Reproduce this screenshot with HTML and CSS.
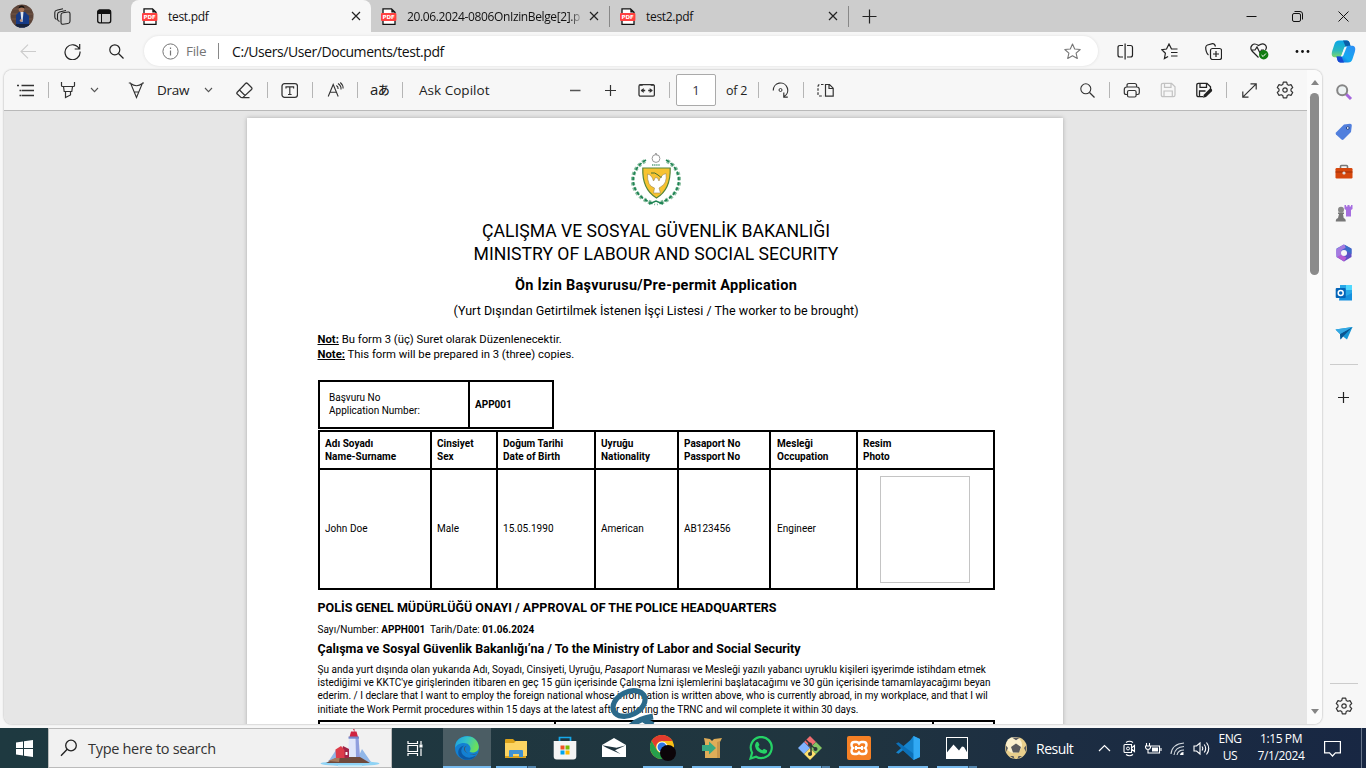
FILE: index.html
```html
<!DOCTYPE html>
<html lang="en">
<head>
<meta charset="utf-8">
<title>test.pdf</title>
<link rel="stylesheet" href="styles.css">
</head>
<body>
<svg width="0" height="0" class="defs">
  <defs>
    <symbol id="pdf" viewBox="0 0 16 17"><path d="M2 .8h8.5L14 4.3v12H2z" fill="#fff" stroke="#111" stroke-width="1.3"/><path d="M10.3 .8v3.7H14z" fill="#111"/><rect x="0" y="5" width="15.4" height="8" rx="1" fill="#ff4141"/><text x="7.7" y="11.3" text-anchor="middle" class="pdf-label">PDF</text></symbol>
    <symbol id="close" viewBox="0 0 10 10"><path d="M1 1l8 8M9 1l-8 8" fill="none" stroke="#222" stroke-width="1.2"/></symbol>
    <symbol id="gear" viewBox="0 0 18 18"><path d="M7.3 1.2h3.4l.5 2.2 1.6.9 2.2-.7 1.7 2.9-1.7 1.6v1.8l1.7 1.6-1.7 2.9-2.2-.7-1.6.9-.5 2.2H7.3l-.5-2.2-1.6-.9-2.2.7-1.7-2.9L3 9.900V8.100L1.300 6.500 3 3.600l2.200.7 1.600-.9z" fill="none" stroke="#333" stroke-width="1.2" stroke-linejoin="round"/><circle cx="9" cy="9" r="2.2" fill="none" stroke="#333" stroke-width="1.2"/></symbol>
    <symbol id="chev" viewBox="0 0 9 6"><path d="M1 1l3.5 3.6L8 1" fill="none" stroke="#555" stroke-width="1.1"/></symbol>
    <linearGradient id="g-edge" x1="0" y1="0" x2="1" y2=".3"><stop offset="0" stop-color="#1b9de2"/><stop offset=".5" stop-color="#34c1c9"/><stop offset="1" stop-color="#6be05a"/></linearGradient>
    <linearGradient id="g-cop1" x1="0" y1="0" x2="0" y2="1"><stop offset="0" stop-color="#0aa5e8"/><stop offset=".6" stop-color="#2bb8bd"/><stop offset="1" stop-color="#7fd86b"/></linearGradient>
    <linearGradient id="g-cop2" x1="1" y1="0" x2="0" y2="1"><stop offset="0" stop-color="#2f8cf5"/><stop offset=".6" stop-color="#12a9f0"/><stop offset="1" stop-color="#1450d8"/></linearGradient>
    <linearGradient id="g-365" x1="0" y1="0" x2="1" y2="1"><stop offset="0" stop-color="#3f79d8"/><stop offset="1" stop-color="#6a3fc0"/></linearGradient>
  </defs>
</svg>

<div class="browser">
  <header class="tabstrip">
    <svg class="avatar" viewBox="0 0 24 24"><defs><clipPath id="round"><circle cx="12" cy="12" r="11.500"/></clipPath></defs><g clip-path="url(#round)"><rect width="24" height="24" fill="#5b4338"/><path d="M0 5h24M0 10h24M0 15h24" stroke="#745747"/><path d="M6 24V11l3-3h6l4 4v12z" fill="#163a86"/><path d="M10.500 8h3l-1 10h-1z" fill="#dfe3ec"/><circle cx="11.500" cy="5.300" r="2.800" fill="#a8755a"/><path d="M8.600 4.500c0-4 6-4 6 0-2-1.500-4-1.500-6 0z" fill="#15110f"/><circle cx="11" cy="16.500" r="1.300" fill="#c39376"/><path d="M4 24l2-4h13l2 4z" fill="#18233d"/></g></svg>
    <svg class="i17" viewBox="0 0 17 17"><g fill="none" stroke="#222" stroke-width="1.100"><rect x="7" y="4.500" width="9" height="11.500" rx="2" transform="skewY(-8) translate(0 1.500)"/><path d="M5.500 13.500C4 13 3.500 12 3.500 11V6.500q0-2 2-2.500l6.500-1.500M2.500 11.500C1.200 11 .8 10 .8 9V4.500q0-1.800 1.900-2.200L9 .8"/></g></svg>
    <svg class="i17" viewBox="0 0 17 17"><rect x="1.700" y="2.200" width="13" height="12.600" rx="2" fill="none" stroke="#111" stroke-width="1.300"/><path d="M1.500 3.500q0-2 2-2h9.500q2 0 2 2V6h-13.500z" fill="#111"/><path d="M5.500 6v9" stroke="#111"/></svg>
    <div class="tab tab-active"><svg class="pdf"><use href="#pdf"/></svg><span class="tab-title">test.pdf</span><svg class="x"><use href="#close"/></svg></div>
    <div class="tab tab-sep"><svg class="pdf"><use href="#pdf"/></svg><span class="tab-title tab-fade">20.06.2024-0806OnIzinBelge[2].p</span><svg class="x"><use href="#close"/></svg></div>
    <div class="tab tab-sep"><svg class="pdf"><use href="#pdf"/></svg><span class="tab-title">test2.pdf</span><svg class="x"><use href="#close"/></svg></div>
    <svg class="i15" viewBox="0 0 15 15"><path d="M7.500 .5v14M.5 7.500h14" stroke="#222" stroke-width="1.200"/></svg>
    <svg class="i11" viewBox="0 0 11 11"><path d="M.5 5.500h10" stroke="#111"/></svg>
    <svg class="i11" viewBox="0 0 11 11"><g fill="none" stroke="#111"><rect x=".5" y="2.500" width="8" height="8" rx="1.500"/><path d="M2.500 .5H8q2.500 0 2.500 2.500v5.500"/></g></svg>
    <svg class="i11" viewBox="0 0 11 11"><path d="M.5 .5l10 10M10.500 .5l-10 10" stroke="#111"/></svg>
  </header>

  <div class="navbar">
    <svg class="i17" viewBox="0 0 17 17"><path d="M16 8.500H1M8 1.700L1 8.500l7 6.800" fill="none" stroke="#ccc" stroke-width="1.100"/></svg>
    <svg class="i17" viewBox="0 0 17 17"><path d="M15.300 6A7.500 7.500 0 1 0 16 8.500M15.700 1v5h-5" fill="none" stroke="#222" stroke-width="1.200"/></svg>
    <svg class="i15" viewBox="0 0 15 15"><path d="M9.500 9.500L14.500 14.500" stroke="#222" stroke-width="1.300"/><circle cx="5.800" cy="5.800" r="5" fill="none" stroke="#222" stroke-width="1.200"/></svg>
    <div class="omnibox">
      <svg class="i17" viewBox="0 0 17 17"><circle cx="8.500" cy="8.500" r="7.600" fill="none" stroke="#757575"/><path d="M8.500 7.500v5M8.500 4.500v1.400" stroke="#757575" stroke-width="1.200"/></svg>
      <span class="file-label">File</span><i class="bar"></i><span class="url">C:/Users/User/Documents/test.pdf</span>
      <svg class="i17 fav" viewBox="0 0 17 17"><path d="M8.500 1l2.200 5 5.500.5-4.100 3.600 1.200 5.400-4.800-2.800-4.800 2.800 1.200-5.400L.8 6.500l5.500-.5z" fill="none" stroke="#777" stroke-width="1.100" stroke-linejoin="round"/></svg>
    </div>
    <svg class="i17" viewBox="0 0 17 17"><path d="M6 2.500H3q-2 0-2 2v7.500q0 2 2 2h3M10 2.500h3.500q2 0 2 2v7.500q0 2-2 2H10M8.100 .5v16" fill="none" stroke="#222" stroke-width="1.200"/></svg>
    <svg class="i17" viewBox="0 0 17 17"><path d="M10.500 6L8 1 5.500 6 .8 6.700l3.600 3.600-1 5.200 3.700-2M10 6h6.500M10 9.500h6.500M10 13h6.500" fill="none" stroke="#222" stroke-width="1.200"/></svg>
    <svg class="i17" viewBox="0 0 17 17"><g fill="none" stroke="#222" stroke-width="1.200"><rect x="5.500" y="5.500" width="11" height="11" rx="2"/><path d="M11 8v6M8 11h6M3.500 12C1.500 11 .5 6 .8 4q.3-1.500 1.700-2l5-1.300q2-.2 3 2.800"/></g></svg>
    <svg class="i19" viewBox="0 0 19 18"><path d="M8.500 15.500L2 9C-1 5 3-.5 8.500 3.500 14-.5 18 4 15.500 8M1 8h4l2-3 3 6 1.500-3H14" fill="none" stroke="#222" stroke-width="1.200"/><circle cx="13.700" cy="12.800" r="4.700" fill="#107c10"/><path d="M11.500 13l1.600 1.500 2.800-3" fill="none" stroke="#fff"/></svg>
    <svg class="i15" viewBox="0 0 15 15"><g fill="#111"><circle cx="2" cy="7.500" r="1.400"/><circle cx="7.500" cy="7.500" r="1.400"/><circle cx="13" cy="7.500" r="1.400"/></g></svg>
    <svg class="i25" viewBox="0 0 25 25"><path d="M8 1.500h7.500q2.500 0 3.200 3l.8 3h-4q-2 0-2.600 2l-2.300 6.500q-.8 2.200-3 2.200H3.500Q-.5 18 1.200 12L3.500 5q1-3.500 4.500-3.500z" fill="url(#g-cop1)"/><path d="M12 1.500h4q2.200 0 2.900 3l.8 3.200h-5z" fill="#0b5da8"/><path d="M17 23.500H9.500q-2.500 0-3.200-3l-.8-3h4q2 0 2.600-2L14.400 9q.8-2.200 3-2.200h4q4 .2 2.400 6.200L21.500 20q-1 3.500-4.500 3.500z" fill="url(#g-cop2)"/><path d="M13 23.500H9.500q-2.500 0-3.200-3l-.8-3h5z" fill="#1748d2"/><path d="M13.600 8.500q.8-1 2.300-1l-3.700 9.300q-.6 1-2 1z" fill="#eef6fb"/></svg>
  </div>

  <div class="content">
    <main class="viewer">
      <section class="pdf-pane">
        <div class="toolbar">
          <svg class="i17" viewBox="0 0 17 17"><path d="M4.500 3.500H17M4.500 8.500H17M4.500 13.500H17M0 3.500h2M2.500 8.500h1.500M2.500 13.500h1.500" stroke="#333" stroke-width="1.300"/></svg>
          <i class="sep"></i>
          <svg class="i17" viewBox="0 0 17 17"><path d="M1.500 0v3.500q0 1 1 1h11q1 0 1-1V0M3.500 4.500l.7 5h7.600l.7-5M5.500 9.500v6l5-2.500V9.500" fill="none" stroke="#333" stroke-width="1.200"/></svg>
          <svg class="chev"><use href="#chev"/></svg>
          <svg class="i17" viewBox="0 0 17 17"><path d="M.8 1h1.700l6 14.500L14.500 1H16M2.700 1.500q5.800 4.500 11.600 0M6 10h5" fill="none" stroke="#333" stroke-width="1.100"/></svg>
          <span class="tool-text draw">Draw</span>
          <svg class="chev"><use href="#chev"/></svg>
          <svg class="i17" viewBox="0 0 17 17"><path d="M1 10.500L9.500 1.500q1-1 2 0l4 4q1 1 0 2L7 15.500H5L1 11.800q-.5-.6 0-1.300zM3.500 8l5.500 5.500M5.500 15.700h8" fill="none" stroke="#333" stroke-width="1.200"/></svg>
          <i class="sep"></i>
          <svg class="i17" viewBox="0 0 17 17"><rect x="1" y="1.700" width="15.500" height="13.600" rx="2.500" fill="none" stroke="#333" stroke-width="1.300"/><path d="M5 6.500V4.800h7.600v1.700M8.800 4.800v7.700M7 12.500h3.600" fill="none" stroke="#333" stroke-width="1.200"/></svg>
          <i class="sep"></i>
          <svg class="i17" viewBox="0 0 17 17"><path d="M1.200 14.500L6.200 2.500l5 12M3 10.300H9.500M9.300 3.500q2 1 1.800 3.500M11 1.500q3.500 2.300 3 6M13.300 .5q3 2.500 2.800 6" fill="none" stroke="#333" stroke-width="1.100"/></svg>
          <i class="sep"></i>
          <span class="translate">a<span class="kana">あ</span></span>
          <i class="sep"></i>
          <span class="tool-text ask">Ask Copilot</span>
          <svg class="i11" viewBox="0 0 11 11"><path d="M0 5.500h10.500" stroke="#555" stroke-width="1.400"/></svg>
          <svg class="i11" viewBox="0 0 11 11"><path d="M0 5.500h11M5.500 0v11" stroke="#333" stroke-width="1.200"/></svg>
          <svg class="i17" viewBox="0 0 17 17"><rect x="1" y="2.700" width="15.400" height="11.500" rx="1.500" fill="none" stroke="#333" stroke-width="1.300"/><path d="M1.700 3h3M12.700 3h3M3.200 8.500h4M10.200 8.500h4" stroke="#333" stroke-width="1.300"/><path d="M2.700 8.500l3-2.500v5zM14.700 8.500l-3-2.500v5z" fill="#333"/></svg>
          <i class="sep"></i>
          <span class="page-input">1</span>
          <span class="tool-text of">of 2</span>
          <i class="sep"></i>
          <svg class="i17" viewBox="0 0 17 17"><path d="M1.300 8.500A7.200 7.200 0 1 1 12 14.500M11.800 10.500v4.700h4" fill="none" stroke="#333" stroke-width="1.200"/><circle cx="8.500" cy="8" r="1.500" fill="none" stroke="#333"/></svg>
          <i class="sep"></i>
          <svg class="i17" viewBox="0 0 17 17"><path d="M8.500 2.500h4l3.700 3.700v8H8.500zM12 2.500v4h4" fill="none" stroke="#333" stroke-width="1.200"/><path d="M6.500 2.500H3q-2 0-2 2V12q0 2 2 2h3.500" fill="none" stroke="#333" stroke-width="1.200" stroke-dasharray="2.500 1.500"/></svg>
          <svg class="i15" viewBox="0 0 15 15"><path d="M9.500 9.500L14.500 14.500" stroke="#333" stroke-width="1.200"/><circle cx="5.800" cy="5.800" r="5" fill="none" stroke="#333" stroke-width="1.100"/></svg>
          <i class="sep"></i>
          <svg class="i17" viewBox="0 0 17 17"><path d="M4.500 12.500H3q-1.700 0-1.700-1.700V7.500q0-2.500 2.500-2.500h10q2.500 0 2.500 2.500v3.300q0 1.700-1.700 1.700H13M4 5V3.500q0-2 2-2h5.600q2 0 2 2V5" fill="none" stroke="#333" stroke-width="1.200"/><rect x="4.500" y="8.500" width="8.600" height="6.500" rx="1.500" fill="none" stroke="#333" stroke-width="1.200"/></svg>
          <svg class="i17" viewBox="0 0 17 17"><path d="M1.300 3q0-1.700 1.700-1.700h8.500l3.500 3.500V13q0 1.700-1.700 1.700H3Q1.300 14.700 1.300 13zM4.500 1.300v4h6.500v-4M4 14.500V9h8.300v5.500" fill="none" stroke="#c2c2c2" stroke-width="1.200"/></svg>
          <svg class="i17" viewBox="0 0 17 17"><path d="M7 14.700H2.500Q.8 14.700.8 13V3q0-1.700 1.700-1.700h8.500l3.500 3.500V7M4 1.300v4h6.500v-4M3.500 14.500V9h6" fill="none" stroke="#222" stroke-width="1.300"/><path d="M7 15.800l.8-3L13.500 7q1.200-.8 2.200.1 1 1.200 0 2.300L10 15z" fill="#222"/></svg>
          <i class="sep"></i>
          <svg class="i15" viewBox="0 0 15 15"><path d="M.8 14.200L14.200 .8M8.500 .8h5.700v5.700M.8 8.500v5.700h5.700" fill="none" stroke="#333" stroke-width="1.200"/></svg>
          <svg class="i18"><use href="#gear"/></svg>
        </div>

        <div class="canvas">
          <article class="page">
            <svg class="emblem" viewBox="0 0 50 54">
              <path d="M14 8C-3 17-4 42 22 50.500M36 8c17 9 18 34-8 42.500" fill="none" stroke="#8ec0a3" stroke-width="4" stroke-dasharray="3 2.200"/>
              <path d="M15 7C-3 17-4 42 24 51.500M35 7c18 10 19 35-9 44.500" fill="none" stroke="#218555" stroke-width="1.800" stroke-dasharray="3.400 2"/>
              <path d="M18 51l7-3 7 3" stroke="#218555" stroke-width="1.500" fill="none"/>
              <path d="M11.800 15h27.400c.4 14-3.500 24-13.700 30C15.500 39 11.200 29 11.800 15z" fill="#f7c331" stroke="#55853c" stroke-width="1.200"/>
              <path d="M16.500 21q4.500 1 6 7l2-3.500 2 .5 1.500 3q1.500-6 7-7.500 1.500 10-5.500 13.500l-1.500 1 1.500 5h-7l1-5Q16 33 16.500 21z" fill="#fff" stroke="#9a8756" stroke-width=".6"/>
              <path d="M20 20q4-1 7 2t4 2" stroke="#48722d" fill="none"/>
              <circle cx="25" cy="5.500" r="3.900" fill="none" stroke="#999"/><path d="M24 1.500l1-1.500 1 2.500" stroke="#999" fill="none"/>
              <path d="M21 12h8" stroke="#5aa17e" stroke-width="1.600" stroke-dasharray="1.400 .7"/>
            </svg>
            <div class="title">ÇALIŞMA VE SOSYAL GÜVENLİK BAKANLIĞI</div>
            <div class="title">MINISTRY OF LABOUR AND SOCIAL SECURITY</div>
            <div class="heading">Ön İzin Başvurusu/Pre-permit Application</div>
            <div class="subhead">(Yurt Dışından Getirtilmek İstenen İşçi Listesi / The worker to be brought)</div>
            <div class="notes">
              <div><b>Not:</b> Bu form 3 (üç) Suret olarak Düzenlenecektir.</div>
              <div><b>Note:</b> This form will be prepared in 3 (three) copies.</div>
            </div>
            <div class="app-table"><div class="app-label">Başvuru No<br>Application Number:</div><div class="app-value">APP001</div></div>
            <div class="grid-table">
              <div class="th">Adı Soyadı<br>Name-Surname</div><div class="th">Cinsiyet<br>Sex</div><div class="th">Doğum Tarihi<br>Date of Birth</div><div class="th">Uyruğu<br>Nationality</div><div class="th">Pasaport No<br>Passport No</div><div class="th">Mesleği<br>Occupation</div><div class="th">Resim<br>Photo</div>
              <div class="td">John Doe</div><div class="td">Male</div><div class="td">15.05.1990</div><div class="td">American</div><div class="td">AB123456</div><div class="td">Engineer</div><div class="td"><div class="photo"></div></div>
            </div>
            <div class="police">POLİS GENEL MÜDÜRLÜĞÜ ONAYI / APPROVAL OF THE POLICE HEADQUARTERS</div>
            <div class="number">Sayı/Number: <b>APPH001</b>&nbsp; Tarih/Date: <b>01.06.2024</b></div>
            <div class="ministry">Çalışma ve Sosyal Güvenlik Bakanlığı’na / To the Ministry of Labor and Social Security</div>
            <div class="para">
              <div class="p1">Şu anda yurt dışında olan yukarıda Adı, Soyadı, Cinsiyeti, Uyruğu, <em>Pasaport</em> Numarası ve Mesleği yazılı yabancı uyruklu kişileri işyerimde istihdam etmek</div>
              <div class="p2">istediğimi ve KKTC'ye girişlerinden itibaren en geç 15 gün içerisinde Çalışma İzni işlemlerini başlatacağımı ve 30 gün içerisinde tamamlayacağımı beyan</div>
              <div class="p3">ederim. / I declare that I want to employ the foreign national whose information is written above, who is currently abroad, in my workplace, and that I wil</div>
              <div class="p4">initiate the Work Permit procedures within 15 days at the latest after entering the TRNC and wil complete it within 30 days.</div>
            </div>
            <div class="sign-table"><div></div><div></div><div></div>
              <svg class="signature" viewBox="0 0 60 40"><ellipse cx="19" cy="16.500" rx="17" ry="11.500" transform="rotate(-27 19 16.500)" fill="none" stroke="#2b6a8b" stroke-width="5.200"/><path d="M21 39Q28 32 43 29.500M34 33l9 5" fill="none" stroke="#2b6a8b" stroke-width="6"/></svg>
            </div>
          </article>
        </div>
      </section>
      <div class="scrollbar"><i class="up"></i><i class="thumb"></i><i class="down"></i></div>
    </main>

    <aside class="sidebar">
      <svg class="i18" viewBox="0 0 18 18"><path d="M11 11l5 5" stroke="#a566dd" stroke-width="3"/><circle cx="7.200" cy="7.200" r="5" fill="#edf2f3" stroke="#858585" stroke-width="2"/></svg>
      <svg class="i18" viewBox="0 0 18 18"><path d="M1 9.500L9 1.500l6-.7q2 0 1.800 2L16 9l-7.500 7.500q-1 .8-2 0L1 11.500q-.8-1 0-2z" fill="#517fdd"/><circle cx="12.800" cy="5" r="1.400" fill="#fff" stroke="#23458d"/></svg>
      <svg class="i18" viewBox="0 0 18 18"><path d="M5.500 5V3.500q0-1 1-1h5q1 0 1 1V5" fill="none" stroke="#777" stroke-width="1.600"/><rect x=".5" y="5" width="17" height="10.500" rx="1.200" fill="#d5460c"/><path d="M.5 9h17" stroke="#9d2e08"/><circle cx="9" cy="10" r="1.600" fill="#ddd"/></svg>
      <svg class="i18" viewBox="0 0 18 18"><path d="M9.500 1h1.500v1.500h1.500V1h2v1.500H16V1h1.500v4L16 6v6.500h-5V6L9.500 5z" fill="#a66ee0"/><circle cx="6" cy="5.800" r="3" fill="#888"/><path d="M3 8.500h6v1.500H8l.7 4q2 .5 2 2.500v1H.8v-1q0-2 2.200-2.500l1-4H3z" fill="#777"/></svg>
      <svg class="i18" viewBox="0 0 18 18"><path d="M9 .5l7.500 4v8.500L9 17.500 1.500 13V4.500z" fill="url(#g-365)"/><path d="M1.500 5l7-4.500q2 .5 2.500 3L6.500 6v5L2 13.500Q.5 9 1.500 5z" fill="#a57be0"/><path d="M2 13l4.500-2.200 5 2.700L9 17.500z" fill="#b65bd3"/><path d="M10 1l6.500 4v5L11.500 7z" fill="#386fc9"/><circle cx="9" cy="9" r="3" fill="#f7f7f7"/></svg>
      <svg class="i18" viewBox="0 0 18 18"><path d="M5 1h11q1 0 1 1v14H5z" fill="#28a8e8"/><path d="M11 1h6v5h-6z" fill="#50d9ff"/><path d="M5 9l6 3 6-3v7.500H4z" fill="#1490df"/><rect x=".7" y="4" width="10" height="10" rx="1" fill="#0364b8"/><circle cx="5.700" cy="9" r="2.500" fill="none" stroke="#fff" stroke-width="1.500"/></svg>
      <svg class="i18" viewBox="0 0 18 18"><path d="M.5 5.500L17.500 3 12 15.500 8 12.500l-2.500 3-.5-5.500z" fill="#1796d5"/><path d="M5 10l12.500-7L8 12.500l-2.500 3z" fill="#0a5590"/><path d="M.5 5.500L17.500 3 5 10z" fill="#35a9e4"/></svg>
      <i class="side-rule"></i>
      <svg class="i11 side-plus" viewBox="0 0 11 11"><path d="M0 5.500h11M5.500 0v11" stroke="#222" stroke-width="1.200"/></svg>
      <i class="side-rule side-rule-low"></i>
      <svg class="i18"><use href="#gear"/></svg>
    </aside>
  </div>
</div>

<footer class="taskbar">
  <div class="start"><svg class="i17" viewBox="0 0 17 17"><path d="M0 2.400l7-1V8H0zM8 1.200L17 0v8H8zM0 9h7v6.600l-7-1zM8 9h9v8l-9-1.200z" fill="#fff"/></svg></div>
  <div class="search">
    <svg class="i18" viewBox="0 0 18 18"><circle cx="11" cy="6.500" r="5.300" fill="none" stroke="#222" stroke-width="1.300"/><path d="M7.200 10.300L1 16.700" stroke="#222" stroke-width="1.400"/></svg>
    <span class="search-text">Type here to search</span>
    <svg class="lighthouse" viewBox="0 0 60 38"><ellipse cx="30" cy="34.500" rx="29.500" ry="2.600" fill="#8fd3f5"/><path d="M8 33l8-12 8 12zM36 33l6-13 9 13z" fill="#91b7e8"/><path d="M6 34l12-6h22l10 6z" fill="#6f4a3c"/><path d="M8 32l12-5-1 6z" fill="#a5795c"/><path d="M29 8h9.500l1.500 20H28z" fill="#dfe5fa"/><path d="M35.500 8h3l1.500 20h-4z" fill="#8f9ede"/><path d="M31 2.500h5.500l1.500 5.500h-8.500zM33 0h1.500v3z" fill="#cf2340"/><path d="M28.500 7.500h10.500v2.200H28.500z" fill="#7686c9"/><path d="M23 17l6 3v9h-9z" fill="#a02447"/><path d="M15.500 20.500l5.500-3.500 3.500 4v8h-8.500z" fill="#dc3c4a"/><path d="M25.500 23h2v3h-2" fill="#fff"/><path d="M18 37h24" stroke="#c9eefa" stroke-width="1.500"/></svg>
  </div>
  <div class="task-view"><svg class="i17" viewBox="0 0 17 17"><path d="M1 1v2.500h9.500V1M1 16v-2.500h9.500V16M1 5.500h9.500v6H1zM14 1v3.500M14 8.500V16" fill="none" stroke="#fff" stroke-width="1.200"/><rect x="12.500" y="4.500" width="3" height="3" fill="#fff"/></svg></div>
  <div class="apps">
    <div class="app app-current run"><svg class="i24" viewBox="0 0 24 24"><circle cx="12" cy="12" r="12" fill="#1380d2"/><path d="M.3 10C1-2 22-4 23.800 10.500 24.200 16 17 18 14.500 15.500 17 13 15 7 9 7 4 7 1 9.500.3 12z" fill="url(#g-edge)"/><path d="M9 9.500Q4 14 8 19q5 5 13 .5Q17 25 9 23.500 1 20 4 13q1.500-3 5-3.500z" fill="#0c59a4"/><path d="M12 9.800q-3.500 2-1.500 5.500 3 4.500 12 2.200-2.500 2-8 .5-4.500-1.500-5.500-4.500-.3-3 3-3.700z" fill="#42545b"/></svg></div>
    <div class="app run-multi"><svg class="i24" viewBox="0 0 24 24"><path d="M1 4q0-1 1-1h7l2 2h11v17H1z" fill="#dba21a"/><path d="M1 7h9l2-2h11v15H1z" fill="#fcd462"/><path d="M5 21v-6q0-1 1-1h12q1 0 1 1v6h-4v-3H9v3z" fill="#3f92d3"/></svg></div>
    <div class="app"><svg class="i24" viewBox="0 0 24 24"><path d="M6.500 6V1.500h11V6" fill="none" stroke="#15a8ea" stroke-width="1.700"/><path d="M.7 5h22.600v15.500q0 3-3 3H3.700q-3 0-3-3z" fill="#f4f4f4"/><path d="M7.500 9.500h4v4h-4z" fill="#f25022"/><path d="M12.500 9.500h4v4h-4z" fill="#7fba00"/><path d="M7.500 14.500h4v4h-4z" fill="#00a4ef"/><path d="M12.500 14.500h4v4h-4z" fill="#ffb900"/></svg></div>
    <div class="app"><svg class="i24" viewBox="0 0 24 24"><path d="M0 9l12-7 12 7v12H0z" fill="#fff"/><path d="M0 9.200l14.500 2.600L24 9.200 13 14.300l5.500 3.700L5 12z" fill="#1f343e"/></svg></div>
    <div class="app run"><svg class="i26" viewBox="0 0 26 26"><circle cx="12" cy="12" r="12" fill="#fbc116"/><path d="M1.600 6A12 12 0 0 1 22.400 6H12a6 6 0 0 0-5.200 9z" fill="#e33b2e"/><path d="M1.600 6A12 12 0 0 0 12 24l5-9-5 3a6 6 0 0 1-5.200-3z" fill="#269f4c"/><circle cx="12" cy="12" r="5.500" fill="#fff"/><circle cx="12" cy="12" r="4.500" fill="#2f78e4"/><circle cx="18" cy="18" r="8" fill="#0c0509"/></svg></div>
    <div class="app run"><svg class="i24" viewBox="0 0 24 24"><path d="M5 7l-1-5 6 1 2 2 2-2 8-1-2 4v16H5z" fill="#e0ad58"/><path d="M17 6l3-1v17h-3z" fill="#c8964b"/><path d="M2 9h7V5.500l7 6.500-7 6.500V15H2z" fill="#38a982"/></svg></div>
    <div class="app run"><svg class="i24" viewBox="0 0 24 24"><path d="M1.500 22.500l1.600-5.800a10.500 10.500 0 1 1 4 4z" fill="none" stroke="#25d366" stroke-width="2.200"/><path d="M7 6.500q1.500-1.500 2.500.2l1 2.300-1.200 1.800q1.300 2.500 4 3.500l1.700-1.600 3 1.600q.7 3-3 3.500Q7 16.500 6 10q0-2 1-3.500z" fill="#25d366"/></svg></div>
    <div class="app run-multi"><svg class="i24" viewBox="0 0 24 24"><path d="M12 0l6 6-6 5-6-5z" fill="#f16d70"/><path d="M6 6l6 6-6 6-6-6z" fill="#80b3ff"/><path d="M18 6l6 6-6 6-6-6z" fill="#85c564"/><path d="M12 12l6 6-6 6-6-6z" fill="#ffe06d"/><path d="M8 4l5 5v10M12 9l6 4" fill="none" stroke="#2a3639" stroke-width="1.500"/><g fill="#2a3639"><circle cx="12" cy="8.500" r="2"/><circle cx="12" cy="18" r="2"/><circle cx="17.500" cy="13" r="2"/></g></svg></div>
    <div class="app run"><svg class="i24" viewBox="0 0 24 24"><rect width="24" height="24" rx="2" fill="#f58025"/><path d="M7.500 6h2q1.500 0 2.500 1.500Q13 6 14.500 6h2Q19.500 6 19.500 9q0 2-1.500 3 1.500 1 1.500 3 0 3-3 3h-2q-1.500 0-2.500-1.500Q11 18 9.500 18h-2q-3 0-3-3 0-2 1.500-3-1.500-1-1.500-3 0-3 3-3z" fill="none" stroke="#fff" stroke-width="2.400"/><path d="M9 12h6M9 10v4M15 10v4" stroke="#fff" stroke-width="2"/></svg></div>
    <div class="app run"><svg class="i24" viewBox="0 0 24 24"><path d="M17.500 0L24 3v18l-6.500 3L7 14.300l-4.500 3.500L0 16.500 14.500 4z" fill="#1584ce"/><path d="M0 7.500L2.500 6.200 18 18V24L0 7.500z" fill="#0c70b8"/><path d="M17.500 0L24 3v18l-6.500 3z" fill="#31a9f4"/></svg></div>
    <div class="app run-multi"><svg class="i24" viewBox="0 0 24 24"><rect x="1.500" y="1.500" width="21" height="21" fill="#1b303f" stroke="#fff"/><path d="M1.500 17l7-8.500 5.500 6 3-4 2 .5 3.500 6v5h-21z" fill="#fff"/></svg></div>
  </div>
  <svg class="i24 ball" viewBox="0 0 24 24"><circle cx="12" cy="12" r="11" fill="#e9cf8c"/><circle cx="10" cy="9" r="8" fill="#fbf0cd"/><path d="M12 7.500l5 3.500-2 5.500H9L7 11zM8 1.600h8l-4 2.700zM1.500 9l2.500 3-2 4zM22.500 9L20 12l2 4zM6 20l3.500 0 1 3M18 20l-3.500 0-1 3" fill="#5a5a5c"/></svg>
  <span class="result">Result</span>
  <svg class="t13" viewBox="0 0 13 13"><path d="M1 9l5.500-5.500L12 9" fill="none" stroke="#fff" stroke-width="1.200"/></svg>
  <svg class="t13h" viewBox="0 0 13 17"><path d="M2 4.500h6.500v8H2q-1 0-1-1v-6q0-1 1-1zM8.500 8l3-2.500v6l-3-2.500M3 2.500q3.500-2.500 7 0M3 14.500q3.500 2.500 7 0" fill="none" stroke="#fff" stroke-width="1.100"/><circle cx="5" cy="8.500" r="1.500" fill="none" stroke="#fff"/></svg>
  <svg class="i17" viewBox="0 0 17 17"><path d="M5 6h9.500v7H5M16 8v3M1.500 3v3M4.500 3v3M.5 6h5v1.500q-.5 2-2.500 2t-2.500-2zM3 9.500V13h2" fill="none" stroke="#fff" stroke-width="1.100"/><path d="M7 7.500h6v4H7z" fill="#fff"/></svg>
  <svg class="i15" viewBox="0 0 15 15"><path d="M1 13Q2 3 14 2M4 14Q5 6 14 5.500M7 14q1-5 7-5" fill="none" stroke="#d5dbe0" stroke-width="1.100"/><path d="M10 14q.5-3 3.500-3v3z" fill="#fff"/></svg>
  <svg class="i17" viewBox="0 0 17 17"><path d="M1 6h2.500L7 3v11l-3.500-3H1zM9 6.500q1.500 2 0 4M11.200 4.500q3 4 0 8M13.500 2.500q4.500 6 0 12" fill="none" stroke="#fff" stroke-width="1.100"/></svg>
  <div class="lang">ENG<br>US</div>
  <div class="clock">1:15 PM<br><span>7/1/2024</span></div>
  <svg class="i17" viewBox="0 0 17 17"><path d="M.6 1.500h15.800v11.300h-5L8.500 16l-3-3.200H.6z" fill="none" stroke="#fff" stroke-width="1.200"/></svg>
  <i class="peek"></i>
</footer>
</body>
</html>
```
FILE: styles.css
```css
* { box-sizing: border-box; }
body { margin: 0; width: 1366px; height: 768px; overflow: hidden; background: #f7f7f7; font-family: "Open Sans", "Noto Sans", sans-serif; color: #222; }
.defs { display: block; height: 0; }
svg { display: block; flex: none; }
i { display: block; }
span { white-space: nowrap; }
.i11 { width: 11px; height: 11px; }
.i15 { width: 15px; height: 15px; }
.i17 { width: 17px; height: 17px; }
.i18 { width: 18px; height: 18px; }
.i19 { width: 19px; height: 18px; }
.i24 { width: 24px; height: 24px; }
.i25 { width: 25px; height: 25px; }
.i26 { width: 26px; height: 26px; }

.browser { height: 728px; display: flex; flex-direction: column; }

/* Tab strip */
.tabstrip { height: 32px; background: #cdcdcd; display: grid; grid-template-columns: 44px 42px 35px 240px 239px 239px 397px 46px 46px 11px; padding-left: 10px; align-items: center; }
.tabstrip > :nth-child(7) { margin-left: 13px; }
.avatar { width: 24px; height: 24px; }
.tab { display: flex; align-items: center; height: 21px; padding: 0 10px; }
.tab-active { height: 32px; background: #f7f7f7; border-radius: 8px 8px 0 0; padding-left: 11px; }
.tab-sep { border-right: 1px solid #888; }
.pdf { width: 16px; height: 17px; margin-right: 10px; }
.pdf-label { font: bold 5.5px "DejaVu Sans", sans-serif; fill: #fff; }
.tab-title { flex: 1; font-size: 12px; letter-spacing: -.3px; color: #111; }
.tab-fade { letter-spacing: -.37px; margin-right: 7px; mask-image: linear-gradient(90deg, #000 93%, rgba(0, 0, 0, .1)); }
.x { width: 10px; height: 10px; }

/* Address row */
.navbar { height: 38px; flex: none; display: grid; grid-template-columns: 44px 45px 35px 973px 44px 44px 45px 45px 36px 25px; padding-left: 20px; align-items: center; }
.omnibox { width: 954px; height: 30px; background: #fff; border-radius: 15px; box-shadow: 0 0 3px #ddd; display: flex; align-items: center; padding: 0 17px 0 18px; }
.file-label { margin-left: 7px; font-size: 13.500px; letter-spacing: -.3px; width: 32px; color: #757575; }
.bar { width: 1px; height: 16px; background: #888; }
.url { margin-left: 13px; font-size: 14px; letter-spacing: -.43px; color: #111; }
.fav { margin-left: auto; }

.content { flex: 1; display: flex; min-height: 0; padding: 0 0 4px 4px; }
.viewer { width: 1318px; display: flex; border-radius: 8px; overflow: hidden; box-shadow: 0 0 2px #999; background: #fbfbfb; }
.pdf-pane { width: 1303px; display: flex; flex-direction: column; }

/* PDF toolbar */
.toolbar { height: 41px; flex: none; background: #f7f7f7; border-bottom: 1px solid #b9b9b9; padding-left: 14px; display: grid; align-items: center;
  grid-template-columns: 30px 13px 30px 38px 28px 48px 32px 30px 15px 30px 16px 29px 13px 32px 17px 151px 35px 34px 30px 7px 50px 32px 15px 30px 15px 262px 29px 15px 37px 36px 29px 16px 35px 18px; }
.toolbar .i17, .toolbar .i18, .toolbar .chev { margin-left: -1px; }
.sep { width: 1px; height: 16px; background: #b5b5b5; }
.chev { width: 9px; height: 6px; }
.tool-text { font-size: 13.500px; letter-spacing: -.25px; }
.ask { letter-spacing: .03px; }
.translate { font-size: 15px; line-height: 18px; padding-bottom: 2px; color: #222; }
.kana { font: 500 12px "Noto Sans CJK JP", sans-serif; margin-left: -.5px; }
.page-input { width: 40px; height: 32px; border: 1px solid #aaa; border-radius: 2px; background: #fff; font-size: 13px; line-height: 31px; text-align: center; color: #334; }
.of { font-size: 12.500px; }

.canvas { flex: 1; min-height: 0; overflow: hidden; background: #e6e6e6; padding: 7px 0 0 243px; }
.page { width: 816px; height: 760px; background: #fff; box-shadow: 0 0 4px #aaa; padding: 35px 0 0 70.500px; font-family: Roboto, sans-serif; color: #000; white-space: nowrap; }
.emblem { width: 50px; height: 54px; margin: 0 0 13px 313px; }
.title, .heading, .subhead { width: 677px; text-align: center; }
.title { font-size: 17.600px; line-height: 23px; height: 23px; }
.heading { font-size: 14.500px; letter-spacing: .27px; font-weight: bold; margin-top: 8px; height: 24px; line-height: 24px; }
.subhead { font-size: 12.500px; letter-spacing: .02px; margin-top: 1px; height: 24px; line-height: 24px; }
.notes { margin-top: 9px; font-size: 11.300px; line-height: 15px; }
.notes b { text-decoration: underline; }
.app-table { width: 236px; height: 49px; margin: 18px 0 1px .5px; border: 2px solid #000; display: grid; grid-template-columns: 150px 82px; align-items: center; font-size: 10px; line-height: 13px; }
.app-label { height: 45px; padding: 9px 0 0 9px; border-right: 2px solid #000; }
.app-value { font-weight: bold; padding-left: 5px; }
.grid-table { width: 677px; height: 160px; margin-left: .5px; border: 2px solid #000; display: grid; grid-template-columns: 112px 66px 98px 83px 92px 87px 135px; grid-template-rows: 38px 118px; font-size: 10px; letter-spacing: .03px; line-height: 13px; }
.th, .td { border-right: 2px solid #000; padding-left: 5px; }
.th { border-bottom: 2px solid #000; font-weight: bold; padding-top: 5px; }
.td { display: flex; align-items: center; }
.td:not(:last-child) { padding-bottom: 2px; }
.th:nth-child(7n), .td:nth-child(7n) { border-right: 0; }
.th:nth-child(6), .td:nth-child(13) { padding-left: 6px; }
.photo { width: 90px; height: 107px; border: 1px solid #c4c4c4; margin-left: 17px; }
.police { margin-top: 8px; font-size: 12.500px; letter-spacing: .02px; font-weight: bold; line-height: 20px; height: 20px; }
.number { margin-top: 4px; font-size: 10px; letter-spacing: .03px; line-height: 16px; height: 16px; }
.ministry { margin-top: 1px; font-size: 12.500px; letter-spacing: .02px; font-weight: bold; line-height: 20px; height: 20px; }
.para { margin-top: 4px; font-size: 10px; letter-spacing: .02px; line-height: 13.200px; height: 57px; }
.p3, .p4 { letter-spacing: .01px; }
.sign-table { position: relative; width: 677px; height: 40px; margin-left: .5px; border: 2px solid #000; display: grid; grid-template-columns: 236px 378px 59px; }
.sign-table > div { border-right: 2px solid #000; }
.sign-table > div:nth-child(3) { border: 0; }
.signature { position: absolute; left: 290px; top: -35px; width: 60px; height: 40px; }

.scrollbar { width: 15px; background: #fbfbfb; display: flex; flex-direction: column; align-items: center; }
.up, .down { border: 4.500px solid transparent; }
.up { border-bottom: 5px solid #858585; border-top: 0; margin-top: 10px; }
.thumb { width: 9px; height: 182px; margin-top: 8px; border-radius: 5px; background: #8b8b8b; }
.down { border-top: 5px solid #858585; border-bottom: 0; margin-top: auto; margin-bottom: 10px; }

.sidebar { width: 43px; padding-top: 13px; display: flex; flex-direction: column; align-items: center; gap: 22.200px; }
.side-rule { width: 28px; height: 1px; background: #ccc; }
.side-plus { margin-top: 4px; }
.side-rule-low { margin-top: auto; margin-bottom: -9px; }
.sidebar > :last-child { margin-bottom: 9px; }

/* Taskbar */
.taskbar { height: 40px; background: linear-gradient(90deg, #1e3940, #20353f 60%, #1c2d42 78%, #182743); color: #fff; display: grid; align-items: center;
  grid-template-columns: 48px 344px 51px 561px 32px 62px 25px 22px 25px 23px 25px 34px 72px 37px 1px; }
.start { padding-left: 16px; }
.search { height: 40px; background: #f1f1f1; border: 1px solid #bbb; display: flex; align-items: center; padding-left: 11px; color: #333; }
.search-text { margin-left: 10px; font-size: 14.500px; letter-spacing: -.3px; width: 232px; }
.lighthouse { width: 60px; height: 38px; }
.task-view { padding-left: 15px; }
.apps { display: flex; gap: 1px; height: 40px; }
.app { width: 48px; height: 40px; display: flex; align-items: center; justify-content: center; }
.app-current { background-color: #4b5d64; }
.run, .run-multi { background-image: linear-gradient(#76b9ed, #76b9ed); background-size: 40px 2px; background-position: 50% 100%; background-repeat: no-repeat; }
.app-current.run { background-size: 48px 2px; }
.run-multi { background-image: linear-gradient(90deg, #76b9ed 31px, #35536b 31px, #35536b 32px, #5384ac 32px); }
.result { font-size: 14px; letter-spacing: -.5px; }
.t13 { width: 13px; height: 13px; }
.t13h { width: 13px; height: 17px; }
.lang, .clock { font-size: 12px; line-height: 17px; text-align: center; letter-spacing: -.4px; padding-bottom: 2px; }
.lang { width: 24px; }
.clock { width: 48px; margin-left: 5px; }
.peek { width: 1px; height: 40px; background: #68758a; }
```
